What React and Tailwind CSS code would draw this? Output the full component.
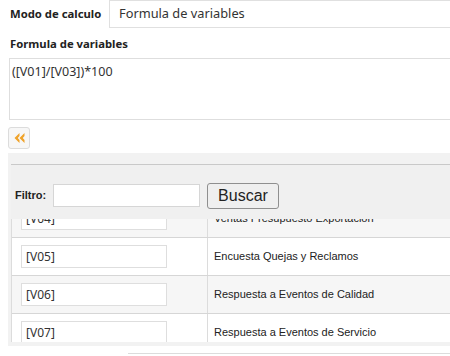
import React from "react";

const rows = [
  { code: "[V04]", name: "Ventas Presupuesto Exportación" },
  { code: "[V05]", name: "Encuesta Quejas y Reclamos" },
  { code: "[V06]", name: "Respuesta a Eventos de Calidad" },
  { code: "[V07]", name: "Respuesta a Eventos de Servicio" },
];

const App = () => {
  return (
    <div className="w-[450px] h-[356px] overflow-hidden bg-white text-[#222] font-['Noto_Sans',sans-serif]">
      {/* modo de calculo */}
      <div className="flex items-center h-[28px] w-[700px]">
        <label className="w-[109px] pl-[10px] text-[11.3px] font-bold">Modo de calculo</label>
        <div className="h-[28px] flex-1 flex items-center pl-[9px] border border-[#e0e0e0] text-[12.8px] text-[#333]">
          Formula de variables
        </div>
      </div>

      <div className="mt-[8px] pl-[10px] text-[11.3px] leading-[16px] font-bold">Formula de variables</div>
      <div className="ml-[9px] mt-[6px] w-[700px] h-[62px] border border-[#dedede] pl-[2px] pt-[4px] text-[12.5px] leading-[18px] text-[#333]">
        ([V01]/[V03])*100
      </div>

      <button
        type="button"
        className="ml-[8px] mt-[7px] w-[22px] h-[22px] flex items-center justify-center rounded-[3px] border border-[#dcdcdc] bg-[#f7f7f7]"
      >
        <svg width="11" height="10" viewBox="0 0 11 10">
          <path d="M5.5 0 L0.5 5 L5.5 10 L5.5 7 L3.8 5 L5.5 3 Z" fill="#f0a32a" />
          <path d="M10.5 0 L5.5 5 L10.5 10 L10.5 7 L8.8 5 L10.5 3 Z" fill="#f0a32a" />
        </svg>
      </button>

      {/* panel */}
      <div className="ml-[8px] mt-[4px] w-[700px] h-[193px] bg-[#f2f2f2] pt-[11px] pl-[3px]">
        <div className="h-[55px] border-t border-[#c9c9c9] bg-[#f0f0f0] pt-[17px] pl-[4px]">
          <div className="flex items-center h-[27px] font-['Liberation_Sans',Arial,sans-serif]">
            <label className="text-[11px] font-bold w-[38px]">Filtro:</label>
            <input
              type="text"
              className="w-[147px] h-[23px] bg-white border border-[#d6d6d6] outline-none"
            />
            <button
              type="button"
              className="ml-[7px] w-[72px] h-[26px] rounded-[3px] border border-[#8f8f8f] bg-[#efefef] text-[16px] text-[#222]"
            >
              Buscar
            </button>
          </div>
        </div>
        <div className="h-[123px] overflow-hidden border-l border-[#dcdcdc]">
          <div className="-mt-[19px]">
            {rows.map((r, i) => (
              <div
                key={r.code}
                className={`flex h-[38px] border-b border-[#d6d6d6] ${i % 2 === 0 ? "bg-[#f6f6f6]" : "bg-white"}`}
              >
                <div className="w-[196px] flex items-center pl-[9px] border-r border-[#dcdcdc]">
                  <div className="w-[146px] h-[23px] bg-white border border-[#dedede] flex items-center pl-[4px] text-[12px] text-[#333]">
                    {r.code}
                  </div>
                </div>
                <div className="flex items-center pl-[6px] text-[11px] text-[#222] font-['Liberation_Sans',Arial,sans-serif]">
                  {r.name}
                </div>
              </div>
            ))}
          </div>
        </div>
      </div>

      <div className="ml-[128px] mt-[7px] w-[400px] border-t border-[#dcdcdc]" />
    </div>
  );
};

export default App;
